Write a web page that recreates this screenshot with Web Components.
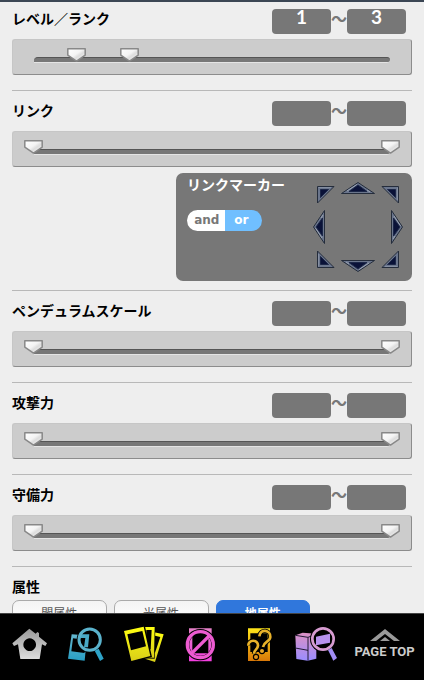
<!DOCTYPE html>
<html lang="ja">
<head>
<meta charset="utf-8">
<meta name="viewport" content="width=device-width, initial-scale=1">
<title>カード検索</title>
<style>
  body {
    margin: 0;
    background: #eee;
    color: #000;
    font-family: "Noto Sans CJK JP", sans-serif;
    font-size: 14px;
    line-height: 18px;
  }
</style>
</head>
<body>
<search-page>
  <range-filter label="レベル／ランク" from="1" to="3" low="12" high="27"></range-filter>
  <range-filter label="リンク">
    <link-marker></link-marker>
  </range-filter>
  <range-filter label="ペンデュラムスケール"></range-filter>
  <range-filter label="攻撃力"></range-filter>
  <range-filter label="守備力"></range-filter>
  <attribute-filter label="属性" options="闇属性,光属性,地属性" selected="地属性"></attribute-filter>
  <bottom-nav slot="footer"></bottom-nav>
</search-page>

<script>
class SearchPage extends HTMLElement {
  constructor() {
    super();
    this.attachShadow({ mode: "open" });
    this.shadowRoot.innerHTML = `
      <style>
        :host {
          display: flex;
          flex-direction: column;
          height: 100vh;
        }
        main {
          flex: 1;
          min-height: 0;
          box-sizing: border-box;
          padding: 0 12px;
          border-top: 2px solid #3b4654;
          overflow-y: auto;
          scrollbar-width: none;
        }
        ::slotted(:first-child) {
          --line: transparent;
          margin-top: -4px;
        }
      </style>
      <main><slot></slot></main>
      <slot name="footer"></slot>
    `;
  }
}

class RangeFilter extends HTMLElement {
  constructor() {
    super();
    this.attachShadow({ mode: "open" });
    const label = this.getAttribute("label");
    const from = this.getAttribute("from") || "";
    const to = this.getAttribute("to") || "";
    const low = this.getAttribute("low") || 0;
    const high = this.getAttribute("high") || 100;

    this.shadowRoot.innerHTML = `
      <style>
        :host {
          display: block;
          padding: 10px 0 15px;
          border-top: 1px solid var(--line, #b8b8b8);
        }
        :host(:not(:empty)) { padding-bottom: 9px; }
        .head {
          display: flex;
          align-items: flex-start;
          padding-right: 6px;
          margin-bottom: 5px;
        }
        h2 {
          flex: 1;
          margin: 0;
          font-size: 14px;
          line-height: 18px;
          font-weight: 700;
        }
        .value {
          box-sizing: border-box;
          width: 59px;
          height: 25px;
          padding: 0 0 10px;
          border: 0;
          border-radius: 4px;
          background: #777;
          color: #fff;
          font: 700 19px/15px Lato, sans-serif;
          text-align: center;
        }
        .tilde {
          width: 16px;
          color: #777;
          font-size: 16px;
          line-height: 18px;
          font-weight: 700;
        }
        .slider {
          box-sizing: border-box;
          height: 36px;
          padding: 17px 21px 0;
          border: 1px solid #c6c6c6;
          border-right-color: #8c8c8c;
          border-bottom: 1px solid #8c8c8c;
          border-radius: 3px;
          background: #ccc;
          position: relative;
        }
        .track {
          height: 6px;
          box-sizing: border-box;
          border-top: 1px solid #555;
          border-bottom: 1px solid #e4e4e4;
          border-radius: 4px 3px 3px 0;
          background: #777;
        }
        input[type="range"] {
          -webkit-appearance: none;
          appearance: none;
          position: absolute;
          top: 8px;
          left: 11px;
          width: calc(100% - 22px);
          height: 14px;
          margin: 0;
          background: none;
          pointer-events: none;
        }
        input[type="range"]::-webkit-slider-thumb {
          -webkit-appearance: none;
          width: 19px;
          height: 14px;
          border: 0;
          pointer-events: auto;
          cursor: pointer;
          background: url("data:image/svg+xml,%3Csvg xmlns='http://www.w3.org/2000/svg' width='19' height='14'%3E%3ClinearGradient id='g' x2='1' y2='1'%3E%3Cstop offset='0' stop-color='%23fff'/%3E%3Cstop offset='.45' stop-color='%23f4f4f4'/%3E%3Cstop offset='.6' stop-color='%23ddd'/%3E%3Cstop offset='1' stop-color='%23fff'/%3E%3C/linearGradient%3E%3Cpath d='M.8.8h17.4v6.4L9.5 13.1.8 7.2z' fill='url(%23g)' stroke='%23888' stroke-width='1.5' stroke-linejoin='round'/%3E%3C/svg%3E") no-repeat;
        }
        slot { display: block; }
      </style>
      <div class="head">
        <h2>${label}</h2>
        <input class="value" type="text" value="${from}" aria-label="${label} 下限">
        <span class="tilde">～</span>
        <input class="value" type="text" value="${to}" aria-label="${label} 上限">
      </div>
      <div class="slider">
        <div class="track"></div>
        <input type="range" min="0" max="100" value="${low}" aria-label="${label} 下限">
        <input type="range" min="0" max="100" value="${high}" aria-label="${label} 上限">
      </div>
      <slot></slot>
    `;
  }
}

class LinkMarker extends HTMLElement {
  constructor() {
    super();
    this.attachShadow({ mode: "open" });

    // Each arrow is one of two shapes, turned around the middle of its cell
    const arrows = [
      { name: "左上", shape: "corner", turn: 0 },
      { name: "上", shape: "side", turn: 0 },
      { name: "右上", shape: "corner", turn: 90 },
      { name: "左", shape: "side", turn: 270 },
      null,
      { name: "右", shape: "side", turn: 90 },
      { name: "左下", shape: "corner", turn: 270 },
      { name: "下", shape: "side", turn: 180 },
      { name: "右下", shape: "corner", turn: 180 },
    ];
    const shapes = {
      corner: `
        <path d="M-7.5-7.5H9L-7.5 9z" fill="#6a758c" stroke="#252d3c"/>
        <path d="M-6.5-6.5H6" stroke="#858fa2" fill="none"/>
        <path d="M-4.5-4.5H3.5L-4.5 3.5z" fill="#0a1238" stroke="#1c2748"/>`,
      side: `
        <path d="M0-5.5 16.5 5.5h-33z" fill="#6a758c" stroke="#252d3c"/>
        <path d="M-1-3.5-11 3M9 2l3 2" stroke="#9aa3b3" fill="none"/>
        <path d="M0-3 9 3.5H-9z" fill="#0a1238" stroke="#1c2748"/>`,
    };
    const box = (a) => {
      if (a.shape === "corner") return "-12 -12 24 24";
      return a.turn % 180 ? "-12 -21 24 42" : "-21 -12 42 24";
    };
    // Side arrows sit on the outer edge of the ring
    const push = (a) => (a.shape === "side" ? "translate(0 -6)" : "");

    this.shadowRoot.innerHTML = `
      <style>
        :host {
          display: flex;
          justify-content: space-between;
          box-sizing: border-box;
          width: 59%;
          min-height: 108px;
          margin: 6px 0 0 auto;
          padding: 2px 9px 9px 11px;
          border-radius: 7px;
          background: #777;
          color: #fff;
        }
        h3 {
          margin: 0 0 17px;
          font-size: 14px;
          line-height: 18px;
          font-weight: 700;
        }
        fieldset {
          display: flex;
          width: 75px;
          margin: 0;
          padding: 0;
          border: 0;
          border-radius: 11px;
          overflow: hidden;
        }
        label {
          box-sizing: border-box;
          width: 50%;
          padding-left: 2px;
          background: #fff;
          color: #777;
          font: 700 12px/21px "DejaVu Sans", sans-serif;
          text-align: center;
          cursor: pointer;
        }
        label + label { padding: 0 4px 0 0; }
        label:has(:checked) {
          background: #70bfff;
          color: #fff;
        }
        label input {
          appearance: none;
          position: absolute;
          margin: 0;
        }
        .ring {
          display: grid;
          grid-template-columns: 24px 42px 24px;
          grid-template-rows: 24px 42px 24px;
          margin-top: 7px;
        }
        button {
          padding: 0;
          border: 0;
          background: none;
          cursor: pointer;
        }
        svg { display: block; width: 100%; height: 100%; }
      </style>
      <div>
        <h3>リンクマーカー</h3>
        <fieldset>
          <label><input type="radio" name="mode">and</label>
          <label><input type="radio" name="mode" checked>or</label>
        </fieldset>
      </div>
      <div class="ring">
        ${arrows
          .map((a) =>
            a
              ? `<button type="button" aria-label="${a.name}">
                  <svg viewBox="${box(a)}"><g transform="rotate(${a.turn}) ${push(a)}">${shapes[a.shape]}</g></svg>
                </button>`
              : "<span></span>"
          )
          .join("")}
      </div>
    `;
  }
}

class AttributeFilter extends HTMLElement {
  constructor() {
    super();
    this.attachShadow({ mode: "open" });
    const options = this.getAttribute("options").split(",");
    const selected = this.getAttribute("selected");

    this.shadowRoot.innerHTML = `
      <style>
        :host {
          display: block;
          padding: 10px 0;
          border-top: 1px solid #b8b8b8;
        }
        h2 {
          margin: 0 0 5px;
          font-size: 14px;
          line-height: 18px;
          font-weight: 700;
        }
        .options {
          display: grid;
          grid-template-columns: repeat(4, 1fr);
          gap: 7px;
        }
        button {
          height: 25px;
          padding: 0;
          border: 1px solid #aaa;
          border-radius: 7px;
          background: linear-gradient(#f4f4f4, #fff);
          color: #555;
          font: 400 12px/20px "Noto Sans CJK JP", sans-serif;
          cursor: pointer;
        }
        button[aria-pressed="true"] {
          border-color: #3077dc;
          background: #3077dc;
          color: #fff;
          font-weight: 700;
        }
      </style>
      <h2>${this.getAttribute("label")}</h2>
      <div class="options">
        ${options
          .map((o) => `<button type="button" aria-pressed="${o === selected}">${o}</button>`)
          .join("")}
      </div>
    `;
    this.shadowRoot.querySelectorAll("button").forEach((b) => {
      b.addEventListener("click", () => {
        b.setAttribute("aria-pressed", b.getAttribute("aria-pressed") !== "true");
      });
    });
  }
}

class BottomNav extends HTMLElement {
  constructor() {
    super();
    this.attachShadow({ mode: "open" });

    const items = [
      {
        name: "ホーム",
        box: "21 198 132 108",
        art: `
          <linearGradient id="home" x2="0" y2="1"><stop stop-color="#999"/><stop offset="1" stop-color="#ddd"/></linearGradient>
          <path fill="url(#home)" fill-rule="evenodd" d="M88 206 107 221 112 216 117 219V230L141 250 136 258 126 253 119 297H61L54 253 42 258 37 250zM89 235a19 19 0 1 0 .1 0z"/>`,
      },
      {
        name: "カード検索",
        box: "195 198 132 108",
        art: `
          <linearGradient id="find" x2="0" y2="1"><stop stop-color="#65b7cf"/><stop offset="1" stop-color="#289ec4"/></linearGradient>
          <path fill="url(#find)" fill-rule="evenodd" d="M218 223 238 224 234 236 222 235 217 274 256 279 260 270 257 302 207 296z"/>
          <circle cx="272" cy="239" r="39" fill="#000"/>
          <path fill="#48a9c6" d="M246 223H271L267 262 255 262 259 234H246z"/>
          <circle cx="272" cy="239" r="32" fill="none" stroke="#5ab2cc" stroke-width="9"/>
          <path d="M287 272 299 266 314 296 303 303z" fill="#2ea3c8"/>`,
      },
      {
        name: "デッキ検索",
        box: "369 198 132 108",
        art: `
          <linearGradient id="deck" x2="0" y2="1"><stop stop-color="#ffff12"/><stop offset="1" stop-color="#d9ce18"/></linearGradient>
          <path fill="url(#deck)" fill-rule="evenodd" d="M462 216 494 223 468 306 438 296zM468 227 484 231 468 278 448 272z"/>
          <path d="M430 199H469L467 296 430 295z"/>
          <path fill="url(#deck)" fill-rule="evenodd" d="M432 201H467L465 293 430 292zM442 210 458 210 455 268H440z"/>
          <path d="M372 210 437 195 459 291 394 307z"/>
          <path fill="url(#deck)" fill-rule="evenodd" d="M375 213 434 200 454 288 397 303zM385 223 430 213 441 259 396 271z"/>`,
      },
      {
        name: "禁止・制限カード",
        box: "540 198 132 108",
        art: `
          <linearGradient id="ban" x2="0" y2="1"><stop stop-color="#e580c8"/><stop offset="1" stop-color="#f43de0"/></linearGradient>
          <path fill="url(#ban)" fill-rule="evenodd" d="M570 205H638V304H570zM580 218V280H628V218z"/>
          <circle cx="604" cy="254" r="40" fill="none" stroke="#000" stroke-width="14"/>
          <g fill="none" stroke="#ed5bd1" stroke-width="10">
            <circle cx="604" cy="254" r="39"/><path d="M576 282 632 226"/>
          </g>`,
      },
      {
        name: "Q&amp;A",
        box: "75 198 132 108",
        art: `
          <linearGradient id="qa" x2="0" y2="1"><stop stop-color="#ffe51a"/><stop offset="1" stop-color="#d87808"/></linearGradient>
          <path fill="url(#qa)" fill-rule="evenodd" d="M108 205H174V303H108zM115 220V276H167V220z"/>
          <g fill="none" stroke="#000" stroke-width="13">
            <path d="M142 229C144 205 176 209 175 231 174 246 156 244 153 261"/>
            <path d="M109 257C108 237 139 238 138 257 137 270 126 268 126 281"/>
            <circle cx="150" cy="273" r="3"/><circle cx="132" cy="291" r="3"/>
          </g>
          <g fill="none" stroke="#e8b22a" stroke-width="8">
            <path d="M142 229C144 205 176 209 175 231 174 246 156 244 153 261"/>
            <path d="M109 257C108 237 139 238 138 257 137 270 126 268 126 281"/>
          </g>
          <circle cx="150" cy="273" r="6" fill="#e5a526"/><circle cx="132" cy="291" r="6" fill="#df931c"/>`,
      },
      {
        name: "収録パック検索",
        box: "249 198 132 108",
        art: `
          <linearGradient id="pack" x2="0" y2="1"><stop stop-color="#dd91c4"/><stop offset="1" stop-color="#9a8cff"/></linearGradient>
          <path fill="url(#pack)" d="M253 226 275 218 316 221V296L290 302 256 297z"/>
          <path d="M253 264 291 271M291 232V302M253 226 291 232 304 227" fill="none" stroke="#221a35" stroke-width="3"/>
          <circle cx="336" cy="237" r="39" fill="#000"/>
          <path d="M315 230 357 221V248L315 256z" fill="#b892ee"/>
          <circle cx="336" cy="237" r="32" fill="none" stroke="#d69bd0" stroke-width="8"/>
          <path d="M351 270 362 264 378 294 367 302z" fill="#a18df5"/>`,
      },
    ];

    this.shadowRoot.innerHTML = `
      <style>
        :host { display: block; }
        nav {
          display: flex;
          box-sizing: border-box;
          height: 67px;
          padding-top: 12px;
          border-top: 1px solid #444;
          background: #000;
        }
        a {
          flex: 115;
          color: #ccc;
          text-decoration: none;
        }
        a svg {
          display: block;
          width: 44px;
          height: 36px;
          margin: 0 auto;
        }
        .top {
          flex: 158;
          font: 700 13px/18px Roboto, sans-serif;
          text-align: center;
          white-space: nowrap;
        }
        .top svg {
          width: 30px;
          height: 13px;
          margin: 3px auto 1px;
        }
      </style>
      <nav>
        ${items
          .map(
            (i) => `<a href="#" aria-label="${i.name}"><svg viewBox="${i.box}">${i.art}</svg></a>`
          )
          .join("")}
        <a class="top" href="#">
          <svg viewBox="0 0 30 13"><path d="M15 0 30 12H24L15 5 6 12H0zM15 8 20 12H10z" fill="#999"/></svg>
          PAGE TOP
        </a>
      </nav>
    `;
  }
}

customElements.define("link-marker", LinkMarker);
customElements.define("range-filter", RangeFilter);
customElements.define("attribute-filter", AttributeFilter);
customElements.define("bottom-nav", BottomNav);
customElements.define("search-page", SearchPage);
</script>
</body>
</html>
